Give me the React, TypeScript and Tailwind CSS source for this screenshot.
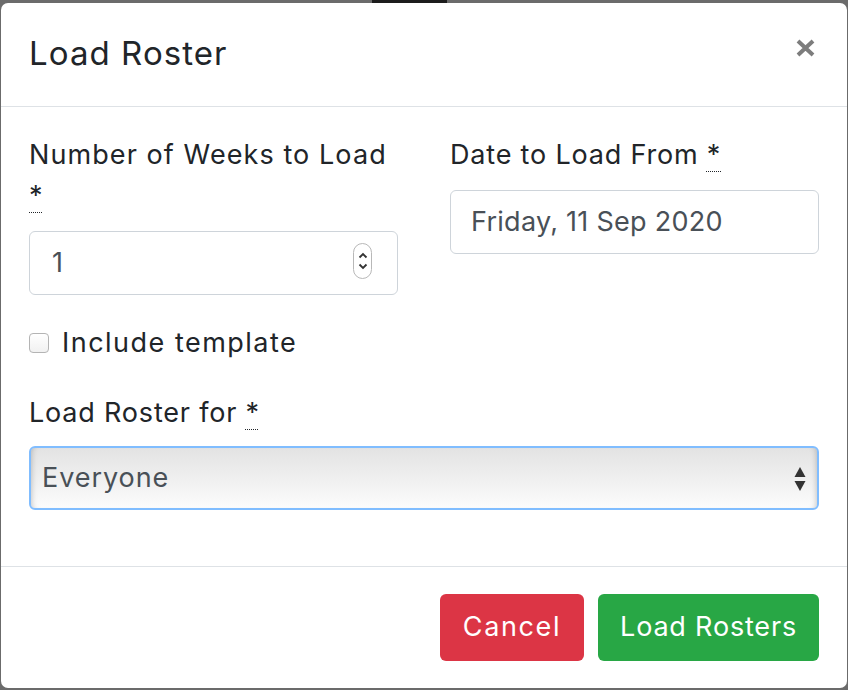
import React from "react";

const font = { fontFamily: "Inter, 'Noto Sans', sans-serif" };

function Req() {
  return (
    <abbr
      title="required"
      className="no-underline"
      style={{ textDecoration: "underline dotted", textUnderlineOffset: "7px", textDecorationThickness: "1px" }}
    >
      *
    </abbr>
  );
}

export default function App() {
  return (
    <div
      className="relative w-[848px] h-[690px] overflow-hidden bg-[#6b6b6b] pt-[3px] pl-[1px]"
      style={font}
    >
      <div className="absolute left-[372px] top-0 w-[75px] h-[3px] bg-[#1c1c1c]" />
      <div className="relative w-[846px] h-[685px] bg-white rounded-[7px] flex flex-col">
        {/* Header */}
        <div className="h-[104px] shrink-0 border-b border-[#dee2e6] px-[28px] flex items-start justify-between">
          <h5 className="mt-[25px] text-[33px] leading-[50px] text-[#212529] tracking-[0.032em]">
            Load Roster
          </h5>
          <button className="mt-[35px] mr-[4px] w-[19px] h-[19px] flex items-center justify-center">
            <svg width="19" height="18" viewBox="0 0 19 18">
              <path d="M2 2 L17 16 M17 2 L2 16" stroke="#7d7d7d" strokeWidth="4" strokeLinecap="butt" />
            </svg>
          </button>
        </div>

        {/* Body */}
        <div className="h-[459px] shrink-0 px-[28px] pt-[27px] text-[#212529]">
          <div className="grid grid-cols-2 gap-x-[52px] items-start">
            <div>
              <label className="block text-[27px] leading-[41px] mb-[15px] tracking-[0.04em]">
                Number of Weeks to Load
                <br />
                <Req />
              </label>
              <div className="relative h-[64px] rounded-[6px] border border-[#ced4da] pl-[22px] pr-[20px] flex items-center text-[27px] text-[#495057]">
                1
                <div className="absolute right-[25px] top-[11px] w-[19px] h-[36px] rounded-full border border-[#b8b8b8] bg-white flex flex-col items-center justify-center gap-[4px]">
                  <svg width="10" height="7" viewBox="0 0 10 7">
                    <path d="M1.5 5.5 L5 2 L8.5 5.5" fill="none" stroke="#333" strokeWidth="1.8" />
                  </svg>
                  <svg width="10" height="7" viewBox="0 0 10 7">
                    <path d="M1.5 1.5 L5 5 L8.5 1.5" fill="none" stroke="#333" strokeWidth="1.8" />
                  </svg>
                </div>
              </div>
            </div>
            <div>
              <label className="block text-[27px] leading-[41px] mb-[15px] tracking-[0.03em]">
                Date to Load From <Req />
              </label>
              <div className="h-[64px] rounded-[6px] border border-[#ced4da] px-[20px] flex items-center text-[27px] text-[#495057] tracking-[0.01em]">
                Friday, 11 Sep 2020
              </div>
            </div>
          </div>

          <div className="mt-[27px] h-[41px] flex items-center">
            <span className="w-[20px] h-[20px] rounded-[4px] border border-[#b4b4b4] bg-gradient-to-b from-white to-[#f1f1f1] shrink-0" />
            <span className="ml-[13px] text-[27px] leading-[41px] tracking-[0.055em]">Include template</span>
          </div>

          <label className="block mt-[29px] text-[27px] leading-[41px] mb-[13px] tracking-[0.03em]">
            Load Roster for <Req />
          </label>
          <div className="relative h-[64px] rounded-[6px] border-2 border-[#80bdff] bg-gradient-to-b from-[#e3e3e3] via-[#efefef] to-[#fcfcfc] shadow-[inset_6px_0_6px_-6px_rgba(0,0,0,0.25),inset_-6px_0_6px_-6px_rgba(0,0,0,0.25)] px-[11px] flex items-center text-[27px] text-[#495057] tracking-[0.035em]">
            Everyone
            <svg className="absolute right-[11px] top-[19px]" width="12" height="24" viewBox="0 0 12 24">
              <path d="M6 0 L11.5 10 L0.5 10 Z" fill="#333" />
              <path d="M0.5 14 L11.5 14 L6 24 Z" fill="#333" />
            </svg>
          </div>
        </div>

        {/* Footer */}
        <div className="flex-1 border-t border-[#dee2e6] pl-[27px] pr-[28px] pt-[27px] flex justify-end items-start gap-[14px]">
          <button className="h-[67px] w-[144px] rounded-[6px] bg-[#dc3545] text-white text-[27px] tracking-[0.06em]">
            Cancel
          </button>
          <button className="h-[67px] w-[221px] rounded-[6px] bg-[#28a745] text-white text-[27px] tracking-[0.03em]">
            Load Rosters
          </button>
        </div>
      </div>
    </div>
  );
}
